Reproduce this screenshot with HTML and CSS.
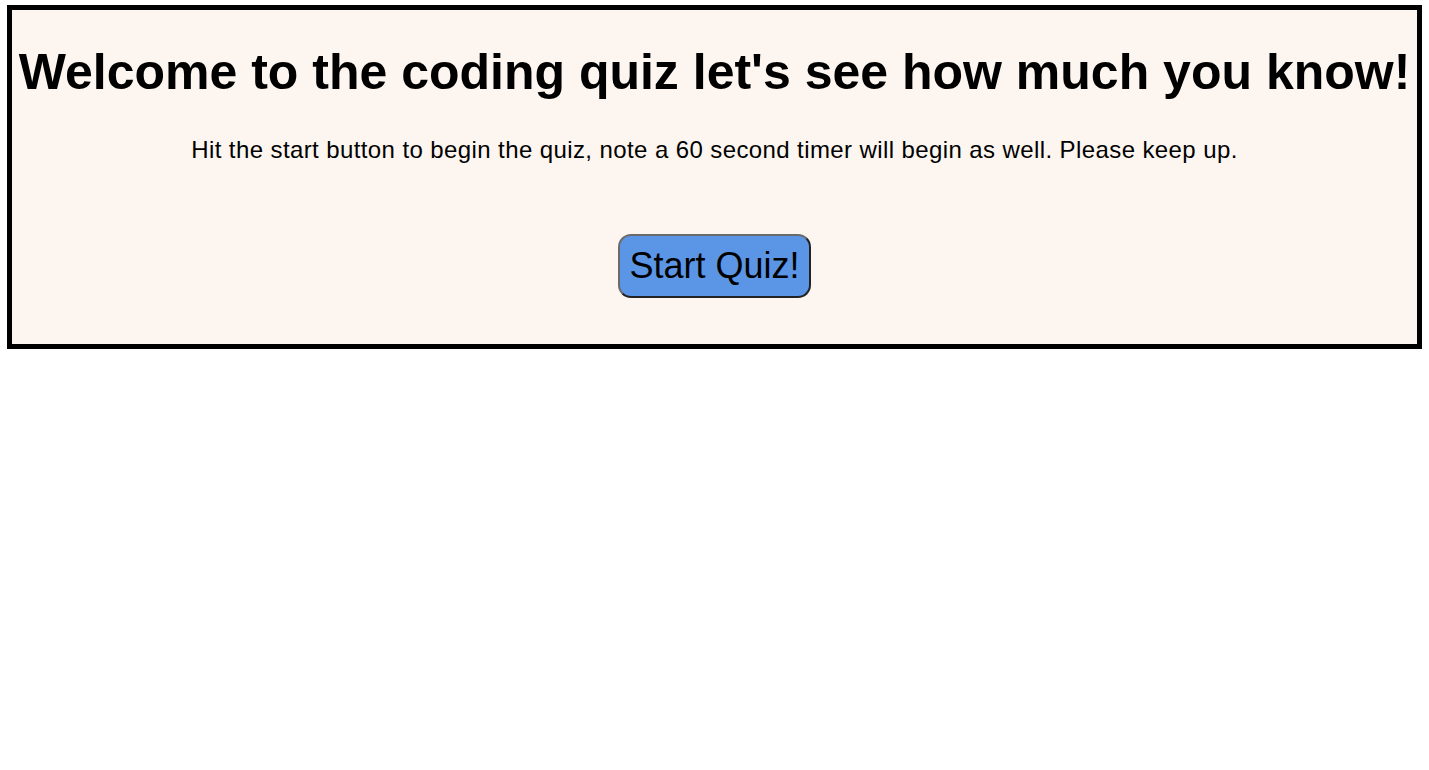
FILE: index.html
```html
<!DOCTYPE html>
<html lang="en">
<head>
<meta charset="utf-8">
<title>Coding Quiz</title>
<link rel="stylesheet" href="styles.css">
</head>
<body>
<main class="intro">
  <h1 class="intro-title">Welcome to the coding quiz let's see how much you know!</h1>
  <p class="intro-text">Hit the start button to begin the quiz, note a 60 second timer will begin as well. Please keep up.</p>
  <button class="start-btn" type="button">Start Quiz!</button>
</main>
</body>
</html>
```
FILE: styles.css
```css
html, body {
  margin: 0;
  padding: 0;
  background: #ffffff;
}
body {
  font-family: "Liberation Sans", Arial, sans-serif;
  color: #000;
}
.intro {
  margin: 5px 7px 0 7px;
  border: 5px solid #000;
  background: #fdf6f0;
  text-align: center;
  padding: 34px 0 46px;
  display: flex;
  flex-direction: column;
  align-items: center;
}
.intro-title {
  font-size: 50px;
  font-weight: bold;
  margin: 0 0 35px;
  line-height: 57px;
  white-space: nowrap;
}
.intro-text {
  font-size: 24px;
  letter-spacing: 0.4px;
  margin: 0 0 70px;
  line-height: 28px;
}
.start-btn {
  font-family: "Liberation Sans", Arial, sans-serif;
  font-size: 36px;
  color: #000;
  background: #5a95e6;
  height: 64px;
  padding: 0 9px;
  border: 2px solid;
  border-color: #6b6b6b #222 #222 #6b6b6b;
  border-radius: 13px;
  line-height: 1;
}
```
